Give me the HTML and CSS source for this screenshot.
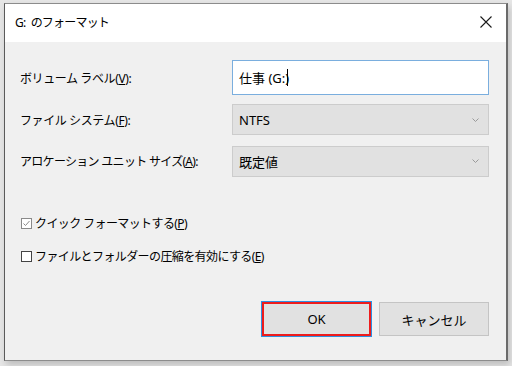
FILE: index.html
```html
<!DOCTYPE html>
<html lang="ja">
<head>
<meta charset="utf-8">
<title>G: のフォーマット</title>
<link rel="stylesheet" href="styles.css">
</head>
<body>
<div class="window">
  <div class="titlebar">
    <span class="title">G: のフォーマット</span>
    <svg class="close" width="12" height="12" viewBox="0 0 12 12"><path d="M0.5 0.5 L11.5 11.5 M11.5 0.5 L0.5 11.5" stroke="#1a1a1a" stroke-width="1.1" fill="none"/></svg>
  </div>
  <div class="body">
    <div class="form">
      <label class="lbl">ボリューム ラベル(<u>V</u>):</label>
      <div class="input"><span>仕事 (G:)</span><span class="caret"></span></div>
      <label class="lbl">ファイル システム(<u>F</u>):</label>
      <div class="select"><span>NTFS</span><svg class="chev" width="7" height="4" viewBox="0 0 7 4"><path d="M0.5 0.5 L3.5 3.5 L6.5 0.5" stroke="#9a9a9a" fill="none"/></svg></div>
      <label class="lbl lbl3">アロケーション ユニット サイズ(<u>A</u>):</label>
      <div class="select select2"><span>既定値</span><svg class="chev" width="7" height="4" viewBox="0 0 7 4"><path d="M0.5 0.5 L3.5 3.5 L6.5 0.5" stroke="#9a9a9a" fill="none"/></svg></div>
    </div>
    <div class="checks">
      <div class="check"><svg class="box" width="11" height="11" viewBox="0 0 11 11"><rect x="0.5" y="0.5" width="10" height="10" fill="#fff" stroke="#8a8a8a"/><path d="M2.5 5.5 L4.5 7.5 L8.5 3" stroke="#8a8a8a" fill="none"/></svg><span>クイック フォーマットする(<u>P</u>)</span></div>
      <div class="check"><svg class="box" width="11" height="11" viewBox="0 0 11 11"><rect x="0.5" y="0.5" width="10" height="10" fill="#fff" stroke="#444"/></svg><span>ファイルとフォルダーの圧縮を有効にする(<u>E</u>)</span></div>
    </div>
    <div class="buttons">
      <button class="btn ok">OK</button>
      <button class="btn">キャンセル</button>
    </div>
  </div>
</div>
</body>
</html>
```
FILE: styles.css
```css
html, body {
  margin: 0;
  padding: 0;
}
body {
  width: 512px;
  height: 366px;
  background: #e6e6e6;
  font-family: "Noto Sans", "Noto Sans CJK JP", sans-serif;
  font-size: 12px;
  color: #000;
  overflow: hidden;
}
.window {
  margin: 3px 0 0 4px;
  width: 501px;
  height: 356px;
  border: 1px solid #8c8c8c;
  border-left-color: #5a5a5a;
  border-right: 2px solid #6a6a6a;
  background: #f0f0f0;
  box-shadow: 2px 4px 7px rgba(0,0,0,0.18);
  display: flex;
  flex-direction: column;
}
.titlebar {
  height: 38px;
  background: #fff;
  display: flex;
  align-items: center;
  justify-content: space-between;
  padding: 0 14px 0 10px;
  flex: none;
}
.title {
  font-size: 12px;
  letter-spacing: -0.8px;
  word-spacing: 3px;
  margin-top: -2px;
}
.close {
  display: block;
  margin-top: -2px;
}
.body {
  flex: 1;
  display: flex;
  flex-direction: column;
  padding: 18px 17px 0 15px;
}
.form {
  display: grid;
  grid-template-columns: 1fr 257px;
  grid-template-rows: 35px 31px 31px;
  row-gap: 9px;
  align-items: center;
}
.form .select2,
.form .lbl3 {
  margin-top: 3px;
}
.lbl {
  letter-spacing: -0.4px;
}
.lbl3 {
  letter-spacing: -0.7px;
}
u {
  text-decoration: underline;
  text-underline-offset: 1px;
}
.input {
  height: 35px;
  box-sizing: border-box;
  border: 1px solid #7aaede;
  background: #fff;
  display: flex;
  align-items: center;
  padding: 0 6px;
  font-size: 13px;
}
.caret {
  display: inline-block;
  width: 1px;
  height: 17px;
  background: #000;
  margin-left: -2px;
}
.select {
  height: 31px;
  box-sizing: border-box;
  border: 1px solid #cccccc;
  background: #e1e1e1;
  display: flex;
  align-items: center;
  justify-content: space-between;
  padding: 0 9px 0 6px;
  font-size: 13px;
}
.chev {
  display: block;
}
.checks {
  margin-top: 38px;
  display: flex;
  flex-direction: column;
  gap: 13px;
}
.check {
  height: 20px;
  display: flex;
  align-items: center;
  gap: 3px;
  padding-left: 1px;
  letter-spacing: -0.6px;
}
.box {
  display: block;
  flex: none;
}
.buttons {
  margin-top: 36px;
  display: flex;
  justify-content: flex-end;
  gap: 8px;
}
.btn {
  width: 110px;
  height: 34px;
  box-sizing: border-box;
  border: 1px solid #c4c4c4;
  background: #e1e1e1;
  font-family: "Noto Sans", "Noto Sans CJK JP", sans-serif;
  font-size: 13px;
  color: #000;
  padding: 0;
  margin: 0;
}
.btn.ok {
  width: 109px;
  border: 2px solid #ee1c1c;
  box-shadow: 0 0 0 1px #2f8fe0;
}
```
